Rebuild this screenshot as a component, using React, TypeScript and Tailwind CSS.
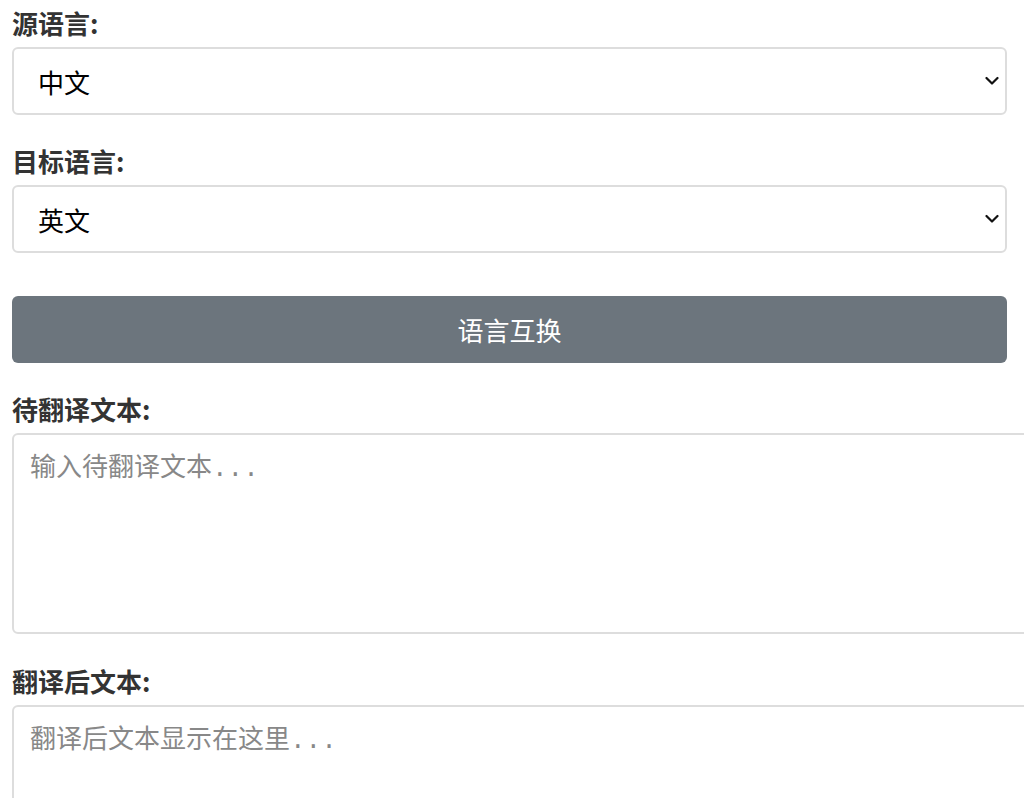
import { useState } from 'react';

const font = 'font-["Noto_Sans_CJK_SC","Noto_Sans",sans-serif]';

function Chevron() {
  return (
    <svg
      className="pointer-events-none absolute right-[8px] top-1/2 -translate-y-1/2"
      width="14"
      height="9"
      viewBox="0 0 14 9"
      fill="none"
    >
      <path d="M1.5 1.5 L7 7 L12.5 1.5" stroke="#111" strokeWidth="2.2" strokeLinecap="round" strokeLinejoin="round" />
    </svg>
  );
}

export default function App() {
  const [source, setSource] = useState('zh');
  const [target, setTarget] = useState('en');
  const [input, setInput] = useState('');
  const [output, setOutput] = useState('');

  // 交换源语言和目标语言
  const swap = () => {
    setSource(target);
    setTarget(source);
  };

  const labelCls = `block text-[26px] leading-[33px] font-bold text-[#333] mb-[8px] ${font}`;
  const selectCls = `w-full h-[68px] appearance-none bg-white border-2 border-[#ddd] rounded-[6px] pl-[24px] pr-10 text-[26px] text-black outline-none ${font}`;
  const areaCls = `box-content block w-full border-2 border-[#ddd] rounded-[6px] p-4 text-[26px] leading-[36px] text-black resize-none outline-none placeholder:text-[#888] font-["Liberation_Mono","Noto_Sans_CJK_SC",monospace]`;

  return (
    <div className="w-full overflow-hidden bg-white">
      <div className="pl-3 pr-[17px] pt-[6px]">
        <label className={labelCls}>源语言:</label>
        <div className="relative mb-[29px]">
          <select className={selectCls} value={source} onChange={(e) => setSource(e.target.value)}>
            <option value="zh">中文</option>
            <option value="en">英文</option>
          </select>
          <Chevron />
        </div>

        <label className={labelCls}>目标语言:</label>
        <div className="relative mb-[43px]">
          <select className={selectCls} value={target} onChange={(e) => setTarget(e.target.value)}>
            <option value="zh">中文</option>
            <option value="en">英文</option>
          </select>
          <Chevron />
        </div>

        <button
          className={`w-full h-[67px] bg-[#6c757d] text-white rounded-[6px] text-[26px] mb-[29px] ${font}`}
          onClick={swap}
        >
          语言互换
        </button>

        <label className={labelCls}>待翻译文本:</label>
        <textarea
          className={`${areaCls} h-[165px] mb-[30px]`}
          placeholder="输入待翻译文本..."
          value={input}
          onChange={(e) => setInput(e.target.value)}
        />

        <label className={labelCls}>翻译后文本:</label>
        <textarea
          className={`${areaCls} h-[165px] mb-6`}
          placeholder="翻译后文本显示在这里..."
          value={output}
          readOnly
          onChange={(e) => setOutput(e.target.value)}
        />
      </div>
    </div>
  );
}
